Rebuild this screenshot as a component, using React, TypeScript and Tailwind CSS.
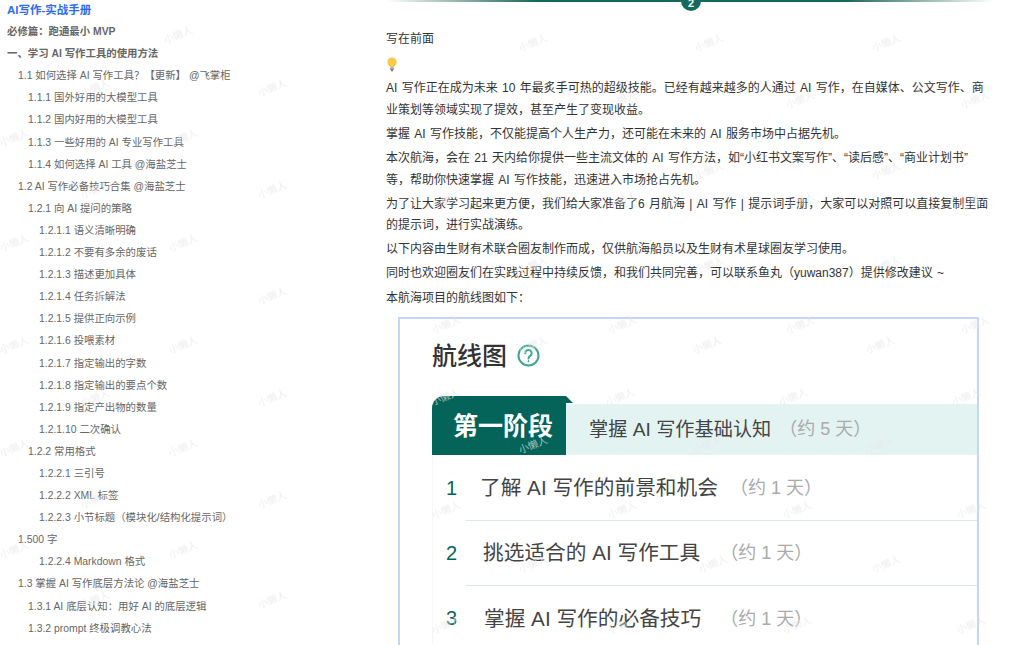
const tocItems: [number, string, boolean?][] = [
  [0, "必修篇：跑通最小 MVP", true],
  [0, "一、学习 AI 写作工具的使用方法", true],
  [1, "1.1 如何选择 AI 写作工具？【更新】 @飞掌柜"],
  [2, "1.1.1 国外好用的大模型工具"],
  [2, "1.1.2 国内好用的大模型工具"],
  [2, "1.1.3 一些好用的 AI 专业写作工具"],
  [2, "1.1.4 如何选择 AI 工具 @海盐芝士"],
  [1, "1.2 AI 写作必备技巧合集 @海盐芝士"],
  [2, "1.2.1 向 AI 提问的策略"],
  [3, "1.2.1.1 语义清晰明确"],
  [3, "1.2.1.2 不要有多余的废话"],
  [3, "1.2.1.3 描述更加具体"],
  [3, "1.2.1.4 任务拆解法"],
  [3, "1.2.1.5 提供正向示例"],
  [3, "1.2.1.6 投喂素材"],
  [3, "1.2.1.7 指定输出的字数"],
  [3, "1.2.1.8 指定输出的要点个数"],
  [3, "1.2.1.9 指定产出物的数量"],
  [3, "1.2.1.10 二次确认"],
  [2, "1.2.2 常用格式"],
  [3, "1.2.2.1 三引号"],
  [3, "1.2.2.2 XML 标签"],
  [3, "1.2.2.3 小节标题（模块化/结构化提示词）"],
  [1, "1.500 字"],
  [3, "1.2.2.4 Markdown 格式"],
  [1, "1.3 掌握 AI 写作底层方法论 @海盐芝士"],
  [2, "1.3.1 AI 底层认知：用好 AI 的底层逻辑"],
  [2, "1.3.2 prompt 终极调教心法"],
];

const indent = ["pl-[7px]", "pl-[18px]", "pl-[28px]", "pl-[39px]"];

const marks = [
  [178, 35], [272, 88], [95, 88], [14, 138], [183, 138], [95, 190], [272, 190],
  [14, 243], [183, 243], [100, 296], [272, 296], [14, 345], [183, 345], [95, 398], [272, 398],
  [14, 448], [183, 448], [95, 500], [272, 500], [14, 550], [183, 550], [95, 600], [272, 600],
  [533, 43], [709, 43], [886, 43], [446, 100], [622, 100], [800, 100], [975, 100],
  [533, 171], [709, 171], [886, 171], [446, 201], [622, 201], [800, 201], [975, 201],
  [533, 265], [709, 265], [886, 265], [446, 325], [622, 325], [800, 325], [975, 325],
  [533, 345], [707, 345], [880, 345], [445, 397], [620, 397], [793, 397], [966, 397],
  [533, 445], [707, 445], [880, 445], [446, 510], [622, 510], [797, 510], [971, 510],
  [533, 564], [713, 564], [886, 564], [446, 625], [622, 625], [797, 625], [971, 625],
];

const routeRows = [
  { n: "1", title: "了解 AI 写作的前景和机会", pad: "pl-[14px]", gap: "ml-[12px]" },
  { n: "2", title: "挑选适合的 AI 写作工具", pad: "pl-[17px]", gap: "ml-[20px]" },
  { n: "3", title: "掌握 AI 写作的必备技巧", pad: "pl-[18px]", gap: "ml-[19px]" },
];

function Bulb() {
  return (
    <svg width="12" height="15" viewBox="0 0 12 15">
      <path d="M6 0.5a4.6 4.6 0 0 0-2.7 8.3c.6.5.9 1 .9 1.7h3.6c0-.7.3-1.2.9-1.7A4.6 4.6 0 0 0 6 .5z" fill="#fbc94a" />
      <rect x="4.2" y="10.5" width="3.6" height="2.6" rx="0.6" fill="#9a8fb5" />
      <rect x="4.9" y="13" width="2.2" height="1.2" rx="0.5" fill="#6d648a" />
    </svg>
  );
}

function HelpIcon() {
  return (
    <svg width="23" height="23" viewBox="0 0 23 23" fill="none" stroke="#3fa78f">
      <circle cx="11.5" cy="11.5" r="10" strokeWidth="2" />
      <path d="M8.3 9.2a3.2 3.2 0 1 1 5 2.6c-1.1.7-1.8 1.2-1.8 2.6" strokeWidth="2" strokeLinecap="round" />
      <circle cx="11.5" cy="17.2" r="0.6" fill="#3fa78f" strokeWidth="1" />
    </svg>
  );
}

export default function App() {
  return (
    <div className="relative flex h-[645px] w-[1024px] overflow-hidden bg-white font-['Liberation_Sans','Noto_Sans_CJK_SC',sans-serif]">
      <aside className="-mt-[1px] w-[386px] shrink-0 text-[10.4px] leading-[22.1px] text-[#666]">
        <div className="pl-[7px] text-[11.5px] font-bold text-[#2f6bf0]">AI写作-实战手册</div>
        {tocItems.map(([level, label, bold], i) => (
          <div key={i} className={`${indent[level]} ${bold ? "font-bold" : ""}`}>
            {label}
          </div>
        ))}
      </aside>

      <main className="w-[606px] shrink-0 text-[12px] leading-[21.6px] text-[#333] [word-spacing:1px]">
        <div className="-mt-[9px] flex h-[20px] items-center">
          <div className="h-[2px] w-[295px] bg-gradient-to-r from-white via-[#15695b] via-50% to-[#15695b]" />
          <div className="flex h-[20px] w-[20px] items-center justify-center rounded-full bg-[#15695b] pt-[6px] text-[11px] font-bold text-white">
            2
          </div>
          <div className="h-[2px] w-[291px] bg-gradient-to-l from-white via-[#15695b] via-50% to-[#15695b]" />
        </div>

        <div className="mt-[18px] flex flex-col gap-[2.5px] pr-[2px]">
          <p>写在前面</p>
          <div className="flex h-[22.6px] items-center">
            <Bulb />
          </div>
          <p>AI 写作正在成为未来 10 年最炙手可热的超级技能。已经有越来越多的人通过 AI 写作，在自媒体、公文写作、商业策划等领域实现了提效，甚至产生了变现收益。</p>
          <p>掌握 AI 写作技能，不仅能提高个人生产力，还可能在未来的 AI 服务市场中占据先机。</p>
          <p>
            本次航海，会在 21 天内给你提供一些主流文体的 AI 写作方法，如“小红书文案写作”、“读后感”、“商业计划书”
            <br />
            等，帮助你快速掌握 AI 写作技能，迅速进入市场抢占先机。
          </p>
          <p>为了让大家学习起来更方便，我们给大家准备了6 月航海 | AI 写作 | 提示词手册，大家可以对照可以直接复制里面的提示词，进行实战演练。</p>
          <p>以下内容由生财有术联合圈友制作而成，仅供航海船员以及生财有术星球圈友学习使用。</p>
          <p>同时也欢迎圈友们在实践过程中持续反馈，和我们共同完善，可以联系鱼丸（yuwan387）提供修改建议 ~</p>
          <p>本航海项目的航线图如下：</p>
        </div>

        <div className="ml-[12px] mt-[8px] h-[340px] w-[581px] border-2 border-b-0 border-[#c5d6fb] pl-[32px] text-[#444] [word-spacing:0]">
          <div className="flex h-[77px] items-start gap-[10px] pt-[20px]">
            <span className="text-[25px] leading-[34px] font-medium text-[#333]">航线图</span>
            <span className="pt-[5px]"><HelpIcon /></span>
          </div>

          <div className="flex h-[59px]">
            <div className="relative flex w-[134px] items-center rounded-tl-[12px] bg-[#05645a] pl-[21px] pt-[3px] text-[25px] font-bold text-white">
              第一阶段
              <span className="absolute -right-[7px] top-0 h-0 w-0 border-b-[7px] border-r-[7px] border-b-[#05645a] border-r-transparent" />
            </div>
            <div className="mt-[8px] flex flex-1 items-center bg-[#e3f3f2] pl-[23px] text-[19.2px]">
              <span>掌握 AI 写作基础认知</span>
              <span className="ml-[8px] text-[18px] text-[#aaa]">（约 5 天）</span>
            </div>
          </div>

          <div className="mt-[1px] border-l border-[#f6f6f6]">
            {routeRows.map((row, i) => (
              <div key={row.n} className="flex h-[65px] items-center text-[20.7px]">
                <span className="w-[33px] pl-[13px] text-[20px] text-[#05645a]">{row.n}</span>
                <div className={`flex h-full flex-1 items-center ${i < 2 ? "border-b border-[#dfe6ee]" : ""}`}>
                  <span className={row.pad}>{row.title}</span>
                  <span className={`${row.gap} pt-[2px] text-[18px] text-[#aaa]`}>（约 1 天）</span>
                </div>
              </div>
            ))}
          </div>
        </div>
      </main>

      {marks.map(([x, y], i) => (
        <span
          key={i}
          className="pointer-events-none absolute -translate-x-1/2 -translate-y-1/2 -rotate-[22deg] text-[10px] text-[#e8e8e8]/70"
          style={{ left: x, top: y }}
        >
          小懒人
        </span>
      ))}
    </div>
  );
}
